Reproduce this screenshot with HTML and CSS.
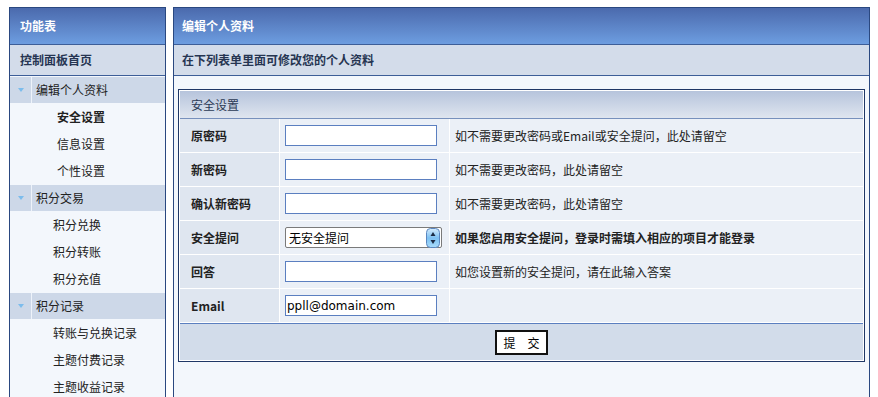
FILE: index.html
```html
<!DOCTYPE html>
<html lang="zh-CN">
<head>
    <meta charset="UTF-8">
    <title>编辑个人资料</title>
    <link rel="stylesheet" href="styles.css">
</head>
<body>
<div class="page">
    <aside class="side">
        <div class="side-head">功能表</div>
        <div class="side-home">控制面板首页</div>

        <div class="group"><span class="arrow"></span><span class="group-name">编辑个人资料</span></div>
        <a class="item first on">安全设置</a>
        <a class="item first">信息设置</a>
        <a class="item first">个性设置</a>

        <div class="group"><span class="arrow"></span><span class="group-name">积分交易</span></div>
        <a class="item">积分兑换</a>
        <a class="item">积分转账</a>
        <a class="item">积分充值</a>

        <div class="group"><span class="arrow"></span><span class="group-name">积分记录</span></div>
        <a class="item">转账与兑换记录</a>
        <a class="item">主题付费记录</a>
        <a class="item">主题收益记录</a>
    </aside>

    <main class="main">
        <div class="main-head">编辑个人资料</div>
        <div class="main-sub">在下列表单里面可修改您的个人资料</div>

        <div class="main-body">
            <form class="box">
                <div class="box-head">安全设置</div>

                <div class="row">
                    <div class="label">原密码</div>
                    <div class="field"><input class="text" type="password"></div>
                    <div class="desc">如不需要更改密码或Email或安全提问，此处请留空</div>
                </div>
                <div class="row">
                    <div class="label">新密码</div>
                    <div class="field"><input class="text" type="password"></div>
                    <div class="desc">如不需要更改密码，此处请留空</div>
                </div>
                <div class="row">
                    <div class="label">确认新密码</div>
                    <div class="field"><input class="text" type="password"></div>
                    <div class="desc">如不需要更改密码，此处请留空</div>
                </div>
                <div class="row">
                    <div class="label">安全提问</div>
                    <div class="field">
                        <div class="select">
                            <span class="select-text">无安全提问</span>
                            <svg class="select-btn" width="15" height="20" viewBox="0 0 15 20">
                                <defs>
                                    <linearGradient id="gb" x1="0" y1="0" x2="0" y2="1">
                                        <stop offset="0" stop-color="#d6ecfc"/>
                                        <stop offset="0.5" stop-color="#7cc0f2"/>
                                        <stop offset="1" stop-color="#a8dcfb"/>
                                    </linearGradient>
                                </defs>
                                <rect x="0.5" y="0.5" width="13" height="19" rx="4" fill="url(#gb)" stroke="#5a86c0"/>
                                <path d="M7 4 L9.5 8 L4.5 8 Z" fill="#1b2b44"/>
                                <path d="M7 16 L9.5 12 L4.5 12 Z" fill="#1b2b44"/>
                            </svg>
                        </div>
                    </div>
                    <div class="desc strong">如果您启用安全提问，登录时需填入相应的项目才能登录</div>
                </div>
                <div class="row">
                    <div class="label">回答</div>
                    <div class="field"><input class="text" type="text"></div>
                    <div class="desc">如您设置新的安全提问，请在此输入答案</div>
                </div>
                <div class="row">
                    <div class="label">Email</div>
                    <div class="field"><input class="text mail" type="text" value="ppll@domain.com"></div>
                    <div class="desc"></div>
                </div>

                <div class="box-foot">
                    <button class="submit" type="button">提　交</button>
                </div>
            </form>
        </div>
    </main>
</div>
</body>
</html>
```

FILE: styles.css
```css
body {
    margin: 0;
    background: #ffffff;
    font-family: "Noto Sans CJK SC", "DejaVu Sans", sans-serif;
    font-size: 12px;
    color: #222;
}

.page {
    display: flex;
    align-items: flex-start;
    gap: 7px;
    padding: 7px 8px 0 9px;
}

/* 左侧菜单 */
.side {
    width: 155px;
    flex: none;
    border: 1px solid #2a4880;
    background: #f3f7fc;
    min-height: 400px;
}

.side-head,
.main-head {
    height: 36px;
    line-height: 36px;
    padding-left: 10px;
    color: #ffffff;
    font-weight: bold;
    font-size: 12px;
    background: linear-gradient(to bottom, #4b6aad, #6d9de0);
    border-bottom: 1px solid #3d5e98;
}

.side-home,
.main-sub {
    height: 30px;
    line-height: 30px;
    padding-left: 10px;
    font-weight: bold;
    color: #263552;
    background: #d3dcea;
    border-bottom: 1px solid #3d5e98;
}

.group {
    display: flex;
    height: 26px;
    margin-top: 1px;
    background: #cdd8e8;
}

.arrow {
    width: 21px;
    border-right: 1px solid #eef3fa;
    position: relative;
}

.arrow:after {
    content: "";
    position: absolute;
    left: 8px;
    top: 11px;
    border-left: 3px solid transparent;
    border-right: 3px solid transparent;
    border-top: 4px solid #7cbcec;
}

.group-name {
    line-height: 26px;
    padding-left: 4px;
    color: #222;
}

.item {
    display: block;
    height: 27px;
    line-height: 27px;
    padding-left: 43px;
    color: #222;
    text-decoration: none;
}

.item.first {
    padding-left: 47px;
}

.item.on {
    font-weight: bold;
}

/* 右侧内容 */
.main {
    flex: 1;
    border: 1px solid #2a4880;
    background: #f3f7fc;
    min-height: 400px;
}

.main-head,
.main-sub {
    padding-left: 8px;
}

.main-body {
    padding: 13px 4px 0 4px;
}

.box {
    margin: 0;
    border: 1px solid #1f3766;
    padding: 1px;
    background: #ffffff;
}

.box-head {
    height: 27px;
    line-height: 27px;
    padding-left: 11px;
    color: #2b3a55;
    font-size: 12px;
    background: linear-gradient(to bottom, #b6c4dc, #dfe5ef);
    border-bottom: 1px solid #7790bc;
}

.row {
    display: flex;
    height: 33px;
    border-bottom: 1px solid #ffffff;
}

.row:last-of-type {
    border-bottom: none;
}

.label {
    width: 88px;
    padding-left: 11px;
    line-height: 33px;
    font-weight: bold;
    color: #222;
    background: #dfe6f0;
    border-right: 1px solid #ffffff;
}

.field {
    width: 164px;
    padding-left: 5px;
    display: flex;
    align-items: center;
    background: #ebf0f7;
    border-right: 1px solid #ffffff;
}

.desc {
    flex: 1;
    padding-left: 5px;
    line-height: 33px;
    color: #222;
    background: #ebf0f7;
}

.desc.strong {
    font-weight: bold;
}

.text {
    box-sizing: border-box;
    width: 152px;
    height: 21px;
    margin: 0;
    padding: 0 1px;
    border: 1px solid #5b7fc0;
    background: #ffffff;
    font-family: "DejaVu Sans", sans-serif;
    font-size: 12px;
    color: #000;
    outline: none;
}

.select {
    box-sizing: border-box;
    display: flex;
    align-items: center;
    width: 157px;
    height: 21px;
    border: 1px solid #7a7a7a;
    border-radius: 2px;
    background: #ffffff;
}

.select-text {
    flex: 1;
    padding-left: 3px;
    color: #000;
}

.select-btn {
    display: block;
}

.box-foot {
    height: 36px;
    display: flex;
    align-items: center;
    justify-content: center;
    background: #d2dcea;
    border-top: 1px solid #5b7fc0;
}

.submit {
    width: 53px;
    height: 25px;
    padding: 0;
    border: 2px solid #111;
    background: #ffffff;
    font-family: "Noto Sans CJK SC", sans-serif;
    font-size: 12px;
    color: #000;
}
```
